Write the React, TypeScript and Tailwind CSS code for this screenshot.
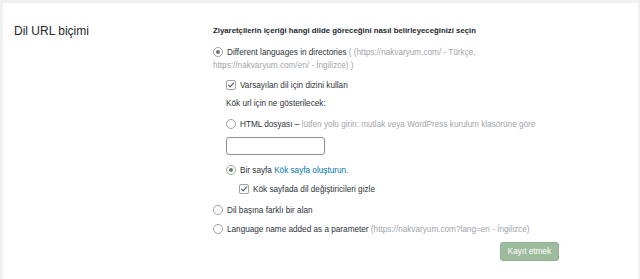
import React from "react";

const font = { fontFamily: '"Liberation Sans", Arial, sans-serif' };

function Radio({ checked = false, green = false }: { checked?: boolean; green?: boolean }) {
  return (
    <span
      className={`inline-flex shrink-0 items-center justify-center w-[10px] h-[10px] rounded-full border bg-white ${
        green ? "border-[#8fb38f]" : "border-[#9ea3a8]"
      }`}
    >
      {checked && <span className="block w-[4px] h-[4px] rounded-full bg-[#6b7580]" />}
    </span>
  );
}

function Check() {
  return (
    <span className="inline-flex shrink-0 items-center justify-center w-[10px] h-[10px] rounded-[2px] border border-[#9ea3a8] bg-white">
      <svg width="8" height="8" viewBox="0 0 10 10" fill="none">
        <path d="M1.8 5.2 L4 7.4 L8.4 2.4" stroke="#4f5b66" strokeWidth="1.4" strokeLinecap="round" strokeLinejoin="round" />
      </svg>
    </span>
  );
}

export default function App() {
  return (
    <div className="w-[640px] h-[279px] bg-[#f1f1f1] pt-[3px] pl-[3px] pr-[2px] overflow-hidden" style={font}>
      <div className="bg-white h-[300px] flex text-[#2c3338]">
        <div className="w-[210px] pl-[11px] pt-[21px] text-[12px] leading-[14px] text-[#23282d]">Dil URL biçimi</div>
        <div className="w-[346px] text-[8.2px] leading-[13px]">
          <div className="mt-[22px] font-bold text-[7.8px] leading-[12px] text-[#23282d]">
            Ziyaretçilerin içeriği hangi dilde göreceğini nasıl belirleyeceğinizi seçin
          </div>
          <div className="mt-[8.5px]">
            <div className="flex items-center gap-[4px]">
              <Radio checked />
              <span>
                <span>Different languages in directories</span>{" "}
                <span className="text-[#a0a5aa]">( (https://nakvaryum.com/ - Türkçe,</span>
              </span>
            </div>
            <div className="text-[#a0a5aa]">https://nakvaryum.com/en/ - İngilizce) )</div>
          </div>
          <div className="ml-[13px]">
            <div className="mt-[7px] flex items-center gap-[4px]">
              <Check />
              <span>Varsayılan dil için dizini kullan</span>
            </div>
            <div className="mt-[5px]">Kök url için ne gösterilecek:</div>
            <div className="mt-[8px] flex items-center gap-[4px]">
              <Radio />
              <span>
                <span>HTML dosyası –</span>{" "}
                <span className="text-[#a0a5aa]">lütfen yolu girin: mutlak veya WordPress kurulum klasörüne göre</span>
              </span>
            </div>
            <div className="mt-[6.5px] w-[99px] h-[18px] border border-[#8c8f94] rounded-[3px] bg-white" />
            <div className="mt-[8.5px] flex items-center gap-[4px]">
              <Radio checked green />
              <span>
                <span>Bir sayfa</span> <span className="text-[#0073aa]">Kök sayfa oluşturun.</span>
              </span>
            </div>
            <div className="mt-[6px] ml-[13px] flex items-center gap-[4px]">
              <Check />
              <span>Kök sayfada dil değiştiricileri gizle</span>
            </div>
          </div>
          <div className="mt-[8px] flex items-center gap-[4px]">
            <Radio />
            <span>Dil başına farklı bir alan</span>
          </div>
          <div className="mt-[6px] flex items-center gap-[4px]">
            <Radio />
            <span>
              <span>Language name added as a parameter</span>{" "}
              <span className="text-[#a0a5aa]">(https://nakvaryum.com?lang=en - İngilizce)</span>
            </span>
          </div>
          <div className="mt-[6px] flex justify-end">
            <div className="h-[19px] px-[7px] rounded-[3px] bg-[#9dbb9d] border border-[#93b293] text-white text-[8.2px] leading-[17px]">
              Kayıt etmek
            </div>
          </div>
        </div>
      </div>
    </div>
  );
}
